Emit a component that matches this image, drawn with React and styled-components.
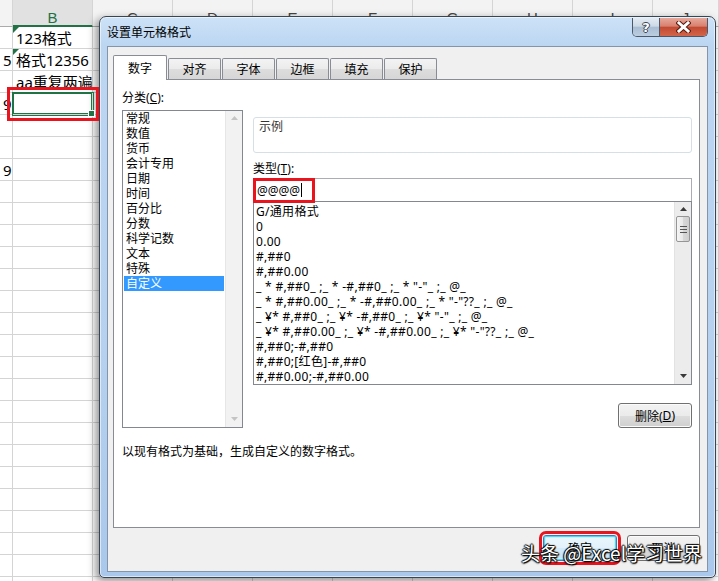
import React from "react";
import styled, { createGlobalStyle, css } from "styled-components";

const GlobalStyle = createGlobalStyle`
  html, body {
    margin: 0;
    padding: 0;
  }
  body {
    background: #fff;
    font-family: "Noto Sans", "Noto Sans CJK SC", sans-serif;
    color: #000;
  }
  * {
    box-sizing: border-box;
  }
`;

const columns = ["", "B", "C", "D", "E", "F", "G", "H", "I", "J"];

const rows = Array.from({ length: 26 }, () => ({ a: "", b: "" }));
rows[0] = { a: "", b: "123格式", flag: true };
rows[1] = { a: "5", b: "格式12356", flag: true };
rows[2] = { a: "", b: "aa重复两遍" };
rows[3] = { a: "9", b: "", selected: true };
rows[6] = { a: "9", b: "" };

const categories = [
  "常规",
  "数值",
  "货币",
  "会计专用",
  "日期",
  "时间",
  "百分比",
  "分数",
  "科学记数",
  "文本",
  "特殊",
  "自定义",
];

const formats = [
  "G/通用格式",
  "0",
  "0.00",
  "#,##0",
  "#,##0.00",
  '_ * #,##0_ ;_ * -#,##0_ ;_ * "-"_ ;_ @_',
  '_ * #,##0.00_ ;_ * -#,##0.00_ ;_ * "-"??_ ;_ @_',
  '_ ¥* #,##0_ ;_ ¥* -#,##0_ ;_ ¥* "-"_ ;_ @_',
  '_ ¥* #,##0.00_ ;_ ¥* -#,##0.00_ ;_ ¥* "-"??_ ;_ @_',
  "#,##0;-#,##0",
  "#,##0;[红色]-#,##0",
  "#,##0.00;-#,##0.00",
];

const tabs = ["数字", "对齐", "字体", "边框", "填充", "保护"];

const Screen = styled.div`
  position: relative;
  width: 719px;
  height: 581px;
  overflow: hidden;
  background: #fff;
`;

/* ---------- spreadsheet behind ---------- */

const Sheet = styled.div`
  display: grid;
  grid-template-columns: 13px repeat(8, 80px) 1fr;
  grid-template-rows: 27px;
  grid-auto-rows: 22px;
`;

const HeadCell = styled.div`
  padding-top: 11px;
  text-align: center;
  background: ${(p) => (p.active ? "#e1e1e1" : "#f3f3f3")};
  border-right: 1px solid #d5d5d5;
  border-bottom: ${(p) => (p.active ? "2px solid #217346" : "1px solid #ababab")};
  color: ${(p) => (p.active ? "#217346" : "#444")};
  font-family: "Liberation Sans", sans-serif;
  font-size: 15px;
  line-height: 14px;
`;

const Cell = styled.div`
  position: relative;
  border-right: 1px solid #d4d4d4;
  border-bottom: 1px solid #d4d4d4;
  padding: 1px 3px 0 3px;
  font-size: 15px;
  line-height: 21px;
  white-space: nowrap;
  overflow: ${(p) => (p.clip ? "hidden" : "visible")};
  text-align: ${(p) => (p.right ? "right" : "left")};
  z-index: ${(p) => (p.selected ? 1 : 0)};

  ${(p) =>
    p.flag &&
    css`
      &::before {
        content: "";
        position: absolute;
        left: 0;
        top: 0;
        border-top: 6px solid #217346;
        border-right: 6px solid transparent;
      }
    `}

  ${(p) =>
    p.selected &&
    css`
      box-shadow: 0 0 0 1px #217346, inset 0 0 0 1px #217346;
      outline: 3px solid #e8141e;
      outline-offset: 3px;
      &::after {
        content: "";
        position: absolute;
        right: -3px;
        bottom: -3px;
        width: 5px;
        height: 5px;
        background: #217346;
        border: 1px solid #fff;
      }
    `}
`;

/* ---------- dialog window ---------- */

const Dialog = styled.div`
  position: absolute;
  left: 99px;
  top: 16px;
  width: 617px;
  height: 562px;
  display: flex;
  flex-direction: column;
  padding: 0 7px 5px 7px;
  border: 1px solid #3a4552;
  border-radius: 7px 7px 5px 5px;
  background: linear-gradient(180deg, #cde2f7 0px, #bcd6f2 28px, #b6d1ef 60%, #aac8eb 100%);
  box-shadow: -3px 3px 9px rgba(0, 0, 0, 0.45), inset 0 0 0 1px rgba(255, 255, 255, 0.55);
  font-size: 12px;
`;

const TitleBar = styled.div`
  height: 29px;
  display: flex;
  justify-content: space-between;
  align-items: flex-start;
`;

const Title = styled.div`
  margin-top: 8px;
  font-size: 12px;
  line-height: 16px;
  color: #000;
`;

const CaptionGroup = styled.div`
  display: flex;
  margin-top: 1px;
  border: 1px solid #4b5867;
  border-top: none;
  border-radius: 0 0 5px 5px;
  overflow: hidden;
`;

const HelpButton = styled.div`
  width: 27px;
  height: 18px;
  display: flex;
  align-items: center;
  justify-content: center;
  border-right: 1px solid #4b5867;
  background: linear-gradient(180deg, #e3ebf4 0%, #cdd9e6 45%, #a9bdd3 52%, #bccde0 100%);
  color: #fff;
  font-family: "DejaVu Sans", sans-serif;
  font-weight: bold;
  font-size: 13px;
  text-shadow: 1px 0 0 #3c4652, -1px 0 0 #3c4652, 0 1px 0 #3c4652, 0 -1px 0 #3c4652;
`;

const CloseButton = styled.div`
  width: 47px;
  height: 18px;
  display: flex;
  align-items: center;
  justify-content: center;
  background: linear-gradient(180deg, #e7a99b 0%, #d98070 45%, #c24a33 52%, #d2654a 100%);
`;

const Body = styled.div`
  flex: 1;
  display: flex;
  flex-direction: column;
  padding: 8px 7px 10px 5px;
  background: #f0f0f0;
  border: 1px solid #8295ab;
`;

const TabRow = styled.div`
  position: relative;
  z-index: 2;
  height: 24px;
  display: flex;
  align-items: flex-end;
`;

const Tab = styled.div`
  display: flex;
  align-items: center;
  justify-content: center;
  border: 1px solid #898c95;
  border-bottom: none;
  font-size: 12px;
  ${(p) =>
    p.active
      ? css`
          width: 54px;
          height: 25px;
          margin-bottom: -1px;
          background: #fff;
          border-radius: 2px 2px 0 0;
          padding-bottom: 1px;
        `
      : css`
          width: 53px;
          height: 21px;
          margin-left: 1px;
          background: linear-gradient(180deg, #f3f3f3 0%, #ebebeb 50%, #dddddd 51%, #d6d6d6 100%);
          border-radius: 2px 2px 0 0;
        `}
`;

const Panel = styled.div`
  flex: 1;
  display: flex;
  flex-direction: column;
  padding: 10px 7px 0 8px;
  background: #fff;
  border: 1px solid #898c95;
`;

const Columns = styled.div`
  display: grid;
  grid-template-columns: 121px 1fr;
  column-gap: 10px;
`;

const Column = styled.div`
  display: flex;
  flex-direction: column;
`;

const Label = styled.div`
  height: 15px;
  line-height: 15px;
  font-size: 12px;
  margin-top: ${(p) => p.mt || 0}px;
`;

const Key = styled.span`
  text-decoration: underline;
`;

const ListBox = styled.div`
  display: flex;
  height: ${(p) => p.h}px;
  margin-top: ${(p) => p.mt || 0}px;
  border: 1px solid #828790;
  background: #fff;
`;

const Items = styled.div`
  flex: 1;
  min-width: 0;
  padding: ${(p) => p.pad};
  overflow: hidden;
  letter-spacing: ${(p) => p.spacing || 0}px;
`;

const Item = styled.div`
  height: 15px;
  line-height: 15px;
  padding-left: ${(p) => p.indent}px;
  white-space: nowrap;
  font-size: 12px;
  background: ${(p) => (p.selected ? "#3399ff" : "transparent")};
  color: ${(p) => (p.selected ? "#fff" : "#000")};
`;

const ScrollTrack = styled.div`
  width: 17px;
  display: flex;
  flex-direction: column;
  align-items: center;
  justify-content: space-between;
  padding: 5px 0 6px;
  background: ${(p) => (p.disabled ? "#f2f2f2" : "#ececec")};
  border-left: 1px solid ${(p) => (p.disabled ? "#e6e6e6" : "#e2e2e2")};
`;

const ThumbArea = styled.div`
  flex: 1;
  width: 100%;
  padding: 5px 1px 0 1px;
`;

const Thumb = styled.div`
  height: 26px;
  border: 1px solid #959595;
  border-radius: 2px;
  background: linear-gradient(90deg, #f5f5f5 0%, #e8e8e8 50%, #d8d8d8 51%, #cfcfcf 100%);
  display: flex;
  flex-direction: column;
  align-items: center;
  justify-content: center;
  gap: 2px;
`;

const Grip = styled.div`
  width: 7px;
  height: 1px;
  background: #555;
`;

const Arrow = ({ down, color }) => (
  <svg width="7" height="4" viewBox="0 0 7 4">
    <polygon points={down ? "0,0 7,0 3.5,4" : "0,4 7,4 3.5,0"} fill={color} />
  </svg>
);

const GroupBox = styled.div`
  margin-top: 27px;
  height: 36px;
  border: 1px solid #d5dfe5;
  border-radius: 3px;
`;

const Legend = styled.div`
  display: inline-block;
  margin: -8px 0 0 4px;
  padding: 0 1px;
  line-height: 15px;
  background: #fff;
  color: #333;
  font-size: 12px;
`;

const TypeField = styled.div`
  position: relative;
  height: 23px;
  margin-top: 2px;
  padding: 0 3px;
  border: 1px solid #abadb3;
  border-bottom: none;
  display: flex;
  align-items: center;
  font-size: 12px;
`;

const Caret = styled.span`
  display: inline-block;
  width: 1px;
  height: 14px;
  margin-left: 1px;
  background: #000;
`;

const Mark = styled.div`
  position: absolute;
  left: -1px;
  top: -1px;
  width: 62px;
  height: 25px;
  border: 3px solid #e8141e;
`;

const RightAlign = styled.div`
  display: flex;
  justify-content: flex-end;
  gap: 10px;
  margin-top: ${(p) => p.mt || 0}px;
`;

const Button = styled.div`
  width: ${(p) => p.w}px;
  height: ${(p) => p.h}px;
  display: flex;
  align-items: center;
  justify-content: center;
  border: 1px solid #707070;
  border-radius: 3px;
  background: linear-gradient(180deg, #f2f2f2 0%, #ebebeb 50%, #dddddd 51%, #cfcfcf 100%);
  box-shadow: inset 0 0 0 1px #fbfbfb;
  font-size: 12px;
  ${(p) =>
    p.primary &&
    css`
      border-color: #3c7fb1;
      background: linear-gradient(180deg, #eaf6fd 0%, #e2f1fb 50%, #d3ebf9 51%, #c6e4f7 100%);
      box-shadow: inset 0 0 0 1px #5cd0f5, inset 0 0 0 2px #c9eefc;
    `}
  ${(p) =>
    p.marked &&
    css`
      outline: 3px solid #e8141e;
      outline-offset: 1px;
    `}
`;

const Description = styled.div`
  margin-top: 16px;
  line-height: 15px;
  font-size: 12px;
`;

const Watermark = styled.div`
  position: absolute;
  left: 521px;
  top: 541px;
  font-family: "Noto Sans CJK SC", sans-serif;
  font-size: 19px;
  line-height: 24px;
  color: #fff;
  white-space: nowrap;
  text-shadow: 1px 1px 1px #000, -1px 0 1px #000, 0 -1px 1px #000, 1px 0 1px #333, 0 1px 2px #000;
`;

const CloseIcon = () => (
  <svg width="15" height="12" viewBox="0 0 15 12">
    <path d="M3 2 L12 10 M12 2 L3 10" stroke="#5a1d12" strokeWidth="5" strokeLinecap="square" />
    <path d="M3 2 L12 10 M12 2 L3 10" stroke="#fff" strokeWidth="3" strokeLinecap="square" />
  </svg>
);

export default function App() {
  return (
    <Screen>
      <GlobalStyle />
      <Sheet>
        {columns.map((c, i) => (
          <HeadCell key={"h" + i} active={c === "B"}>
            {c}
          </HeadCell>
        ))}
        {rows.map((r, i) => (
          <React.Fragment key={"r" + i}>
            <Cell right clip>
              {r.a}
            </Cell>
            <Cell flag={r.flag} selected={r.selected}>
              {r.b}
            </Cell>
            {columns.slice(2).map((c) => (
              <Cell key={c} />
            ))}
          </React.Fragment>
        ))}
      </Sheet>

      <Dialog>
        <TitleBar>
          <Title>设置单元格格式</Title>
          <CaptionGroup>
            <HelpButton>?</HelpButton>
            <CloseButton>
              <CloseIcon />
            </CloseButton>
          </CaptionGroup>
        </TitleBar>

        <Body>
          <TabRow>
            {tabs.map((t, i) => (
              <Tab key={t} active={i === 0}>
                {t}
              </Tab>
            ))}
          </TabRow>

          <Panel>
            <Columns>
              <Column>
                <Label>
                  分类(<Key>C</Key>):
                </Label>
                <ListBox h={318} mt={5}>
                  <Items pad="0 1px">
                    {categories.map((c) => (
                      <Item key={c} indent={2} selected={c === "自定义"}>
                        {c}
                      </Item>
                    ))}
                  </Items>
                  <ScrollTrack disabled>
                    <Arrow color="#c4c4c4" />
                    <Arrow down color="#c4c4c4" />
                  </ScrollTrack>
                </ListBox>
              </Column>

              <Column>
                <GroupBox>
                  <Legend>示例</Legend>
                </GroupBox>
                <Label mt={8}>
                  类型(<Key>T</Key>):
                </Label>
                <TypeField>
                  @@@@
                  <Caret />
                  <Mark />
                </TypeField>
                <ListBox h={184}>
                  <Items pad="2px 0 0 0" spacing={0.3}>
                    {formats.map((f) => (
                      <Item key={f} indent={2}>
                        {f}
                      </Item>
                    ))}
                  </Items>
                  <ScrollTrack>
                    <Arrow color="#3a3a3a" />
                    <ThumbArea>
                      <Thumb>
                        <Grip />
                        <Grip />
                        <Grip />
                      </Thumb>
                    </ThumbArea>
                    <Arrow down color="#3a3a3a" />
                  </ScrollTrack>
                </ListBox>
                <RightAlign mt={18}>
                  <Button w={74} h={25}>
                    删除(<Key>D</Key>)
                  </Button>
                </RightAlign>
              </Column>
            </Columns>
            <Description>以现有格式为基础，生成自定义的数字格式。</Description>
          </Panel>

          <RightAlign mt={7}>
            <Button w={74} h={26} primary marked>
              确定
            </Button>
            <Button w={73} h={26}>
              取消
            </Button>
          </RightAlign>
        </Body>
      </Dialog>

      <Watermark>头条 @Excel学习世界</Watermark>
    </Screen>
  );
}
